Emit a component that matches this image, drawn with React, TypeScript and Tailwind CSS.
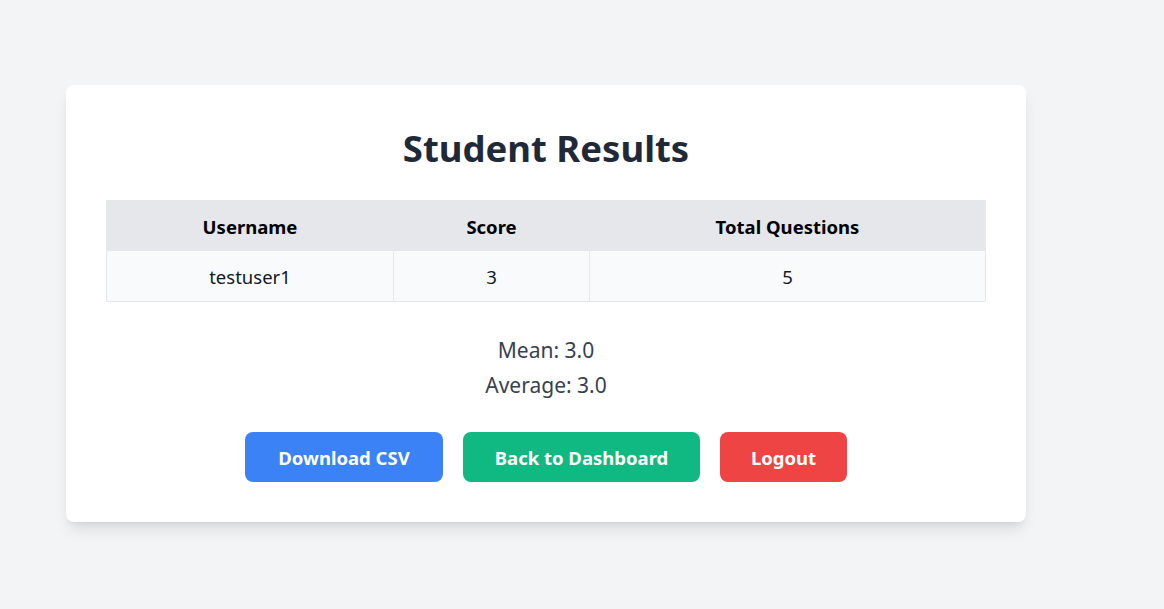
import React from "react";

export default function App() {
  const font = { fontFamily: '"Noto Sans", "Open Sans", sans-serif' };
  return (
    <div className="min-h-screen w-full bg-[#f3f4f6] pl-[66px] pt-[85px]" style={font}>
      <div className="w-[960px] rounded-lg bg-white p-10 shadow-lg">
        <h1 className="h-[40px] pt-[3px] text-center text-[36.5px] font-bold leading-[40px] text-[#1f2937]">
          Student Results
        </h1>
        <table className="mt-[35px] w-full border-collapse text-[18.5px]">
          <thead>
            <tr className="bg-[#e5e7eb]">
              <th className="h-[50px] w-[287px] border border-[#e5e7eb] pt-[2px] font-bold text-black">Username</th>
              <th className="h-[50px] w-[196px] border border-[#e5e7eb] pt-[2px] font-bold text-black">Score</th>
              <th className="h-[50px] border border-[#e5e7eb] pt-[2px] font-bold text-black">Total Questions</th>
            </tr>
          </thead>
          <tbody>
            <tr className="bg-[#f9fafb]">
              <td className="h-[51px] border border-[#e5e7eb] pt-[2px] text-center text-[#111827]">testuser1</td>
              <td className="h-[51px] border border-[#e5e7eb] pt-[2px] text-center text-[#111827]">3</td>
              <td className="h-[51px] border border-[#e5e7eb] pt-[2px] text-center text-[#111827]">5</td>
            </tr>
          </tbody>
        </table>
        <div className="mt-[31px] text-center text-[21px] text-[#374151]">
          <p className="h-[35px] leading-[35px]">Mean: 3.0</p>
          <p className="h-[35px] leading-[35px]">Average: 3.0</p>
        </div>
        <div className="mt-[29px] flex justify-center gap-5">
          <button className="h-[50px] w-[198px] rounded-lg bg-[#3b82f6] pt-[2px] text-[18.5px] font-bold text-white">
            Download CSV
          </button>
          <button className="h-[50px] w-[237px] rounded-lg bg-[#10b981] pt-[2px] text-[18.5px] font-bold text-white">
            Back to Dashboard
          </button>
          <button className="h-[50px] w-[127px] rounded-lg bg-[#ef4444] pt-[2px] text-[18.5px] font-bold text-white">
            Logout
          </button>
        </div>
      </div>
    </div>
  );
}
